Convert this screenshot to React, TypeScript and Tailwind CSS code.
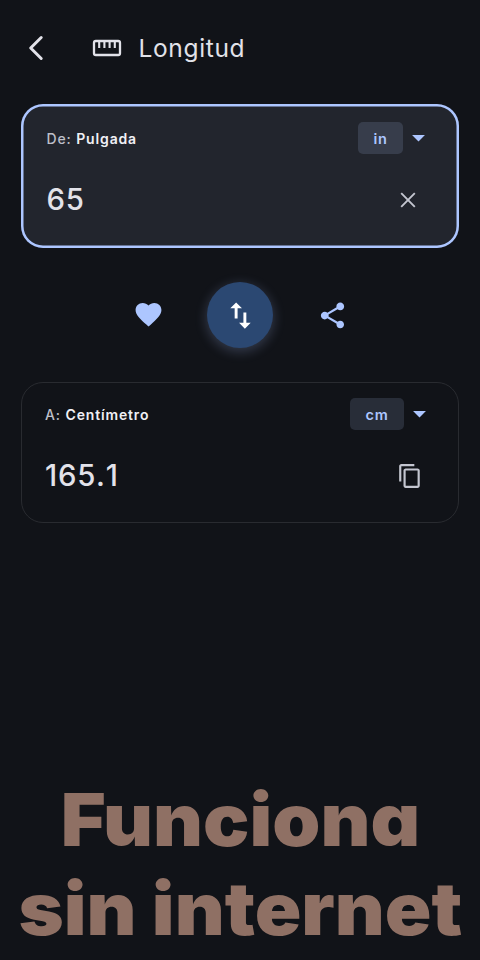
import React from "react";
import { MdArrowDropDown, MdContentCopy, MdFavorite, MdShare, MdSwapVert } from "react-icons/md";

function BackIcon() {
  return (
    <svg width="16" height="26" viewBox="0 0 16 26" fill="none" stroke="#e2e2e9" strokeWidth="3" strokeLinecap="round" strokeLinejoin="round">
      <path d="M13.2 2.5 2.7 13 13.2 23.5" />
    </svg>
  );
}

function RulerIcon() {
  return (
    <svg width="30" height="18" viewBox="0 0 30 18" fill="none" stroke="#e2e2e9" strokeWidth="2.3">
      <rect x="2" y="2" width="26" height="14" rx="1.8" />
      <path d="M7.2 2v7M12.4 2v7M17.6 2v7M22.8 2v7" strokeWidth="2.1" />
    </svg>
  );
}

type CardProps = {
  label: string;
  unit: string;
  symbol: string;
  value: string;
  frame: string;
  chip: string;
  action: React.ReactNode;
};

function UnitCard({ label, unit, symbol, value, frame, chip, action }: CardProps) {
  return (
    <section className={`flex flex-col rounded-[22px] ${frame}`}>
      <div className="flex h-8 items-center">
        <p className="pt-px text-[14px] font-medium tracking-[0.85px] text-[#bdbfc8]">
          {label} <span className="font-semibold text-[#f0f0f5]">{unit}</span>
        </p>
        <span className={`ml-auto flex h-8 items-center justify-center rounded-[5px] pt-px text-[14.5px] font-semibold tracking-[0.7px] text-[#adc6ff] ${chip}`}>
          {symbol}
        </span>
        <MdArrowDropDown className="-mt-px" size={31} color="#adc6ff" />
      </div>
      <div className="mt-[26px] flex h-10 items-center justify-between">
        <span className="text-[29.3px] font-medium tracking-[0.8px] text-[#e2e2e9] [font-kerning:none]">{value}</span>
        {action}
      </div>
    </section>
  );
}

export default function App() {
  return (
    <main className="flex h-[960px] w-[480px] flex-col overflow-hidden bg-[#111318] font-['Inter',sans-serif]">
      <header className="flex h-24 items-center pl-[28px]">
        <BackIcon />
        <div className="ml-[48px]"><RulerIcon /></div>
        <h1 className="ml-[16.5px] text-[24.5px] font-normal leading-none tracking-[0.65px] text-[#e2e2e9]">Longitud</h1>
      </header>
      <div className="mx-[21px] mt-2 flex flex-col">
        <UnitCard
          label="De:"
          unit="Pulgada"
          symbol="in"
          value="65"
          frame="h-[144px] bg-[#22252d] pt-[18px] pl-[25.5px] pr-[25px] shadow-[inset_0_0_0_2.5px_#adc6ff]"
          chip="w-[45px] bg-[#373d4b]"
          action={
            <svg className="mr-[18px]" width="16" height="16" viewBox="0 0 16 16" fill="none" stroke="#c4c6d0" strokeWidth="1.9">
              <path d="m1.2 1.2 13.6 13.6M14.8 1.2 1.2 14.8" />
            </svg>
          }
        />
        <nav className="mt-[34px] flex h-[66px] items-center justify-center gap-[43.5px]">
          <MdFavorite className="-mt-px" size={31} color="#adc6ff" />
          <button className="flex size-[66px] items-center justify-center rounded-full bg-[#2b4872] shadow-[0_3px_12px_1px_rgba(173,198,255,0.22)]">
            <MdSwapVert size={35} color="#ffffff" />
          </button>
          <MdShare size={31} color="#adc6ff" />
        </nav>
        <div className="mt-[34px]">
          <UnitCard
            label="A:"
            unit="Centímetro"
            symbol="cm"
            value="165.1"
            frame="h-[141px] border border-[#292b30] pt-[15px] pl-[23px] pr-[23px]"
            chip="w-[54px] bg-[#282d38]"
            action={<MdContentCopy className="mr-[12.5px]" size={26} color="#c4c6d0" />}
          />
        </div>
      </div>
      <footer className="mt-auto flex h-[184px] flex-col items-center whitespace-nowrap text-[73px] font-black leading-[88.5px] text-[#8f7064] [font-feature-settings:'cv11']">
        <div className="scale-x-[1.055]">Funciona</div>
        <div className="scale-x-[1.055]">sin internet</div>
      </footer>
    </main>
  );
}
